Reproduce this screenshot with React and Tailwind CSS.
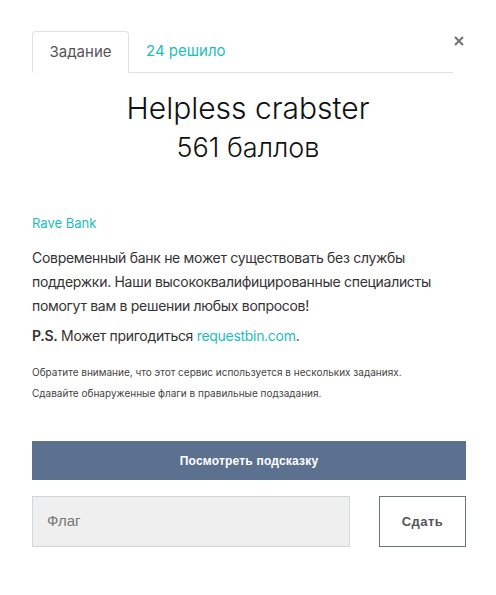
import React from 'react';

const App = () => {
  return (
    <div className="w-[496px] h-[595px] bg-white relative font-['Inter',sans-serif] text-[#333]">
      {/* close */}
      <button className="absolute left-[453px] top-[35px] w-[12px] h-[12px] flex items-center justify-center">
        <svg width="10" height="10" viewBox="0 0 10 10">
          <path d="M1 1L9 9M9 1L1 9" stroke="#777" strokeWidth="2.2" />
        </svg>
      </button>

      <div className="pt-[31px] px-[32px]">
        {/* tabs */}
        <div className="flex w-[421px] border-b border-[#dee2e6]">
          <div className="h-[42px] w-[97px] -mb-px flex items-center justify-center bg-white border border-b-white border-[#dee2e6] rounded-t-[4px] text-[15px] text-[#555]">
            Задание
          </div>
          <div className="h-[41px] px-[17px] flex items-center text-[15px] text-[#1ebcc0]">
            24 решило
          </div>
        </div>

        {/* title */}
        <div className="text-center">
          <h1 className="mt-[17px] text-[30px] leading-[36px] font-light text-[#111]">Helpless crabster</h1>
          <div className="mt-[6px] text-[27px] leading-[32px] font-light text-[#111]">561 баллов</div>
        </div>

        {/* description */}
        <div className="mt-[50px] text-[13px] leading-[18px] text-[#1ebcc0]">Rave Bank</div>
        <p className="mt-[14px] text-[14px] leading-[24px] tracking-[-0.3px]">
          Современный банк не может существовать без службы поддержки. Наши высококвалифицированные специалисты помогут вам в решении любых вопросов!
        </p>
        <p className="mt-[6px] text-[14px] leading-[24px] tracking-[-0.3px]">
          <b className="font-semibold">P.S.</b> Может пригодиться <span className="text-[#1ebcc0]">requestbin.com</span>.
        </p>
        <div className="mt-[14px] text-[10px] leading-[21px] text-[#444]">
          <p>Обратите внимание, что этот сервис используется в нескольких заданиях.</p>
          <p>Сдавайте обнаруженные флаги в правильные подзадания.</p>
        </div>

        {/* hint */}
        <button className="mt-[37px] w-[434px] h-[39px] bg-[#5c7090] text-white text-[12px] font-bold tracking-[0.2px] font-['Liberation_Sans',sans-serif]">
          Посмотреть подсказку
        </button>

        {/* flag */}
        <div className="mt-[16px] flex w-[434px] justify-between">
          <div className="w-[318px] h-[51px] bg-[#efefef] border border-[#d0d5da] flex items-center px-[14px] text-[15px] text-[#777] font-['Liberation_Sans',sans-serif]">
            Флаг
          </div>
          <button className="w-[87px] h-[51px] border border-[#6b747c] bg-white text-[13px] font-bold text-[#555] tracking-[0.5px] font-['Liberation_Sans',sans-serif]">
            Сдать
          </button>
        </div>
      </div>
    </div>
  );
};

export default App;
